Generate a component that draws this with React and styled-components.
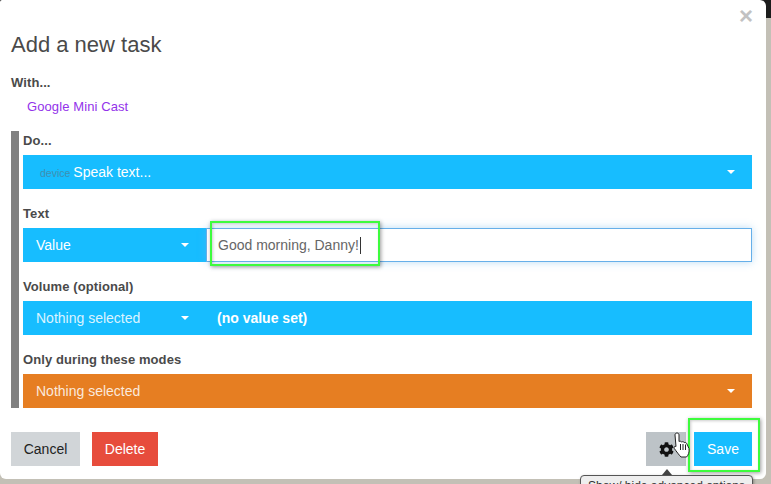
import React from "react";
import styled, { createGlobalStyle } from "styled-components";
import { FaCog } from "react-icons/fa";

const Global = createGlobalStyle`
  html, body { margin: 0; padding: 0; height: 100%; overflow: hidden; }
  body { font-family: "Liberation Sans", Arial, sans-serif; }
  * { box-sizing: border-box; }
`;

const Backdrop = styled.div`
  position: relative;
  width: 771px;
  height: 484px;
  overflow: hidden;
  background: linear-gradient(#1c1c1c 18px, #c3c0b6 18px);
`;
const Modal = styled.div`
  position: relative;
  width: 766px;
  height: 479px;
  padding: 34px 14px 0 11px;
  background: #fff;
  border-radius: 2px 6px 6px 6px;
  color: #444;
`;
const Close = styled.div`
  position: absolute;
  top: 7px;
  right: 13px;
  color: #c2c2c2;
  font-size: 24px;
  font-weight: 700;
  line-height: 18px;
`;
const Title = styled.h2`
  margin: 0;
  height: 22px;
  font-size: 22px;
  font-weight: 400;
  line-height: 22px;
  color: #4a4a4a;
`;
const Label = styled.div`
  height: 15px;
  font-size: 13px;
  font-weight: 700;
  line-height: 15px;
  color: #4a4a4a;
  letter-spacing: 0.1px;
`;
const With = styled(Label)`
  margin-top: 19px;
`;
const DeviceLink = styled.div`
  margin: 9px 0 0 16px;
  height: 15px;
  font-size: 13px;
  line-height: 15px;
  letter-spacing: 0.1px;
  color: #9333ea;
`;
const Section = styled.div`
  margin-top: 17px;
  border-left: 8px solid #808080;
  padding-left: 4px;
  height: 277px;
`;
const Field = styled.div`
  padding-top: ${(p) => (p.$first ? "2px" : "17px")};
`;
const FieldLabel = styled(Label)`
  margin-bottom: 7px;
`;
const Row = styled.div`
  display: flex;
  width: 729px;
  height: 34px;
`;
const Select = styled.div`
  display: flex;
  align-items: center;
  justify-content: space-between;
  flex: ${(p) => (p.$half ? "0 0 183px" : "1")};
  height: 34px;
  padding: 0 17px 0 13px;
  background: ${(p) => (p.$orange ? "#e67e22" : "#17bdff")};
  color: ${(p) => (p.$muted ? "rgba(255,255,255,0.85)" : "#fff")};
  font-size: 14px;
`;
const SelectText = styled.span`
  display: flex;
  align-items: baseline;
`;
const Subtext = styled.small`
  margin: 0 3px 0 4px;
  font-size: 10.5px;
  color: #3f8fb0;
`;
const Caret = styled.span`
  width: 0;
  height: 0;
  border-left: 4px solid transparent;
  border-right: 4px solid transparent;
  border-top: 4px solid #fff;
`;
const Input = styled.div`
  flex: 1;
  display: flex;
  align-items: center;
  padding-left: 11px;
  border: 1px solid #66afe9;
  box-shadow: 0 0 8px rgba(102, 175, 233, 0.45);
  font-size: 14px;
  color: #666;
`;
const TextCaret = styled.span`
  display: inline-block;
  width: 1px;
  height: 17px;
  margin-left: 1px;
  background: #333;
`;
const Static = styled.div`
  flex: 1;
  display: flex;
  align-items: center;
  padding-left: 11px;
  background: #17bdff;
  color: #fff;
  font-size: 14px;
  font-weight: 700;
`;
const Footer = styled.div`
  display: flex;
  align-items: center;
  margin-top: 24px;
  width: 741px;
`;
const Button = styled.div`
  display: flex;
  align-items: center;
  justify-content: center;
  height: 34px;
  width: ${(p) => p.$w}px;
  margin-left: ${(p) => p.$ml || 0}px;
  background: ${(p) => p.$bg};
  color: ${(p) => p.$fg || "#fff"};
  font-size: 14px;
`;
const Spacer = styled.div`
  flex: 1;
`;
const Highlight = styled.div`
  position: absolute;
  left: ${(p) => p.$x}px;
  top: ${(p) => p.$y}px;
  width: ${(p) => p.$w}px;
  height: ${(p) => p.$h}px;
  border: 2px solid #3dfc3d;
  box-shadow: 1px 1px 4px rgba(0, 0, 0, 0.4), inset 1px 1px 3px rgba(0, 0, 0, 0.2);
`;
const Hand = styled.svg`
  position: absolute;
  left: 673px;
  top: 432px;
`;
const Tooltip = styled.div`
  position: absolute;
  left: 580px;
  top: 475px;
  width: 173px;
  height: 22px;
  padding-top: 3px;
  background: #eee;
  border: 1px solid #555;
  border-radius: 4px;
  box-shadow: 1px 1px 3px rgba(0, 0, 0, 0.3);
  text-align: center;
  font-size: 12px;
  white-space: nowrap;
  color: #333;
`;
const TooltipArrow = styled.div`
  position: absolute;
  left: 662px;
  top: 469px;
  width: 0;
  height: 0;
  border-left: 5px solid transparent;
  border-right: 5px solid transparent;
  border-bottom: 6px solid #444;
`;

export default function App() {
  return (
    <Backdrop>
      <Global />
      <Modal>
        <Close>×</Close>
        <Title>Add a new task</Title>
        <With>With...</With>
        <DeviceLink>Google Mini Cast</DeviceLink>
        <Section>
          <Field $first>
            <FieldLabel>Do...</FieldLabel>
            <Row>
              <Select>
                <SelectText>
                  <Subtext>device</Subtext>Speak text...
                </SelectText>
                <Caret />
              </Select>
            </Row>
          </Field>
          <Field>
            <FieldLabel>Text</FieldLabel>
            <Row>
              <Select $half>
                Value
                <Caret />
              </Select>
              <Input>
                Good morning, Danny!
                <TextCaret />
              </Input>
            </Row>
          </Field>
          <Field>
            <FieldLabel>Volume (optional)</FieldLabel>
            <Row>
              <Select $half $muted>
                Nothing selected
                <Caret />
              </Select>
              <Static>(no value set)</Static>
            </Row>
          </Field>
          <Field>
            <FieldLabel>Only during these modes</FieldLabel>
            <Row>
              <Select $orange $muted>
                Nothing selected
                <Caret />
              </Select>
            </Row>
          </Field>
        </Section>
        <Footer>
          <Button $w={69} $bg="#d1d5d8" $fg="#222">Cancel</Button>
          <Button $w={66} $ml={12} $bg="#e74c3c">Delete</Button>
          <Spacer />
          <Button $w={40} $bg="#bdc3c7" $fg="#111">
            <FaCog size={15} />
          </Button>
          <Button $w={58} $ml={8} $bg="#17bdff">Save</Button>
        </Footer>
      </Modal>
      <Highlight $x={210} $y={221} $w={170} $h={45} />
      <Highlight $x={688} $y={418} $w={72} $h={54} />
      <TooltipArrow />
      <Tooltip>Show/ hide advanced options</Tooltip>
      <Hand width="18" height="26" viewBox="0 0 18 26">
        <path
          d="M4 1C5.200 1 6 1.800 6 3V9.500C7 9 8 9.200 8.700 10C9.700 9.400 10.800 9.700 11.300 10.600C12.300 10.200 13.500 10.700 13.800 11.700L16 16.500C16.500 20 15.500 23 13.500 25H8C6 23 3.500 19.500 1.300 16.500C.6 15 1.800 13.800 3 14.500L2 3C2 1.800 2.800 1 4 1Z"
          fill="#fff"
          stroke="#222"
          strokeWidth="1"
        />
        <path d="M7.500 12V18M10 12V18M12.500 12.500V18" stroke="#222" strokeWidth="1" fill="none" />
      </Hand>
    </Backdrop>
  );
}
